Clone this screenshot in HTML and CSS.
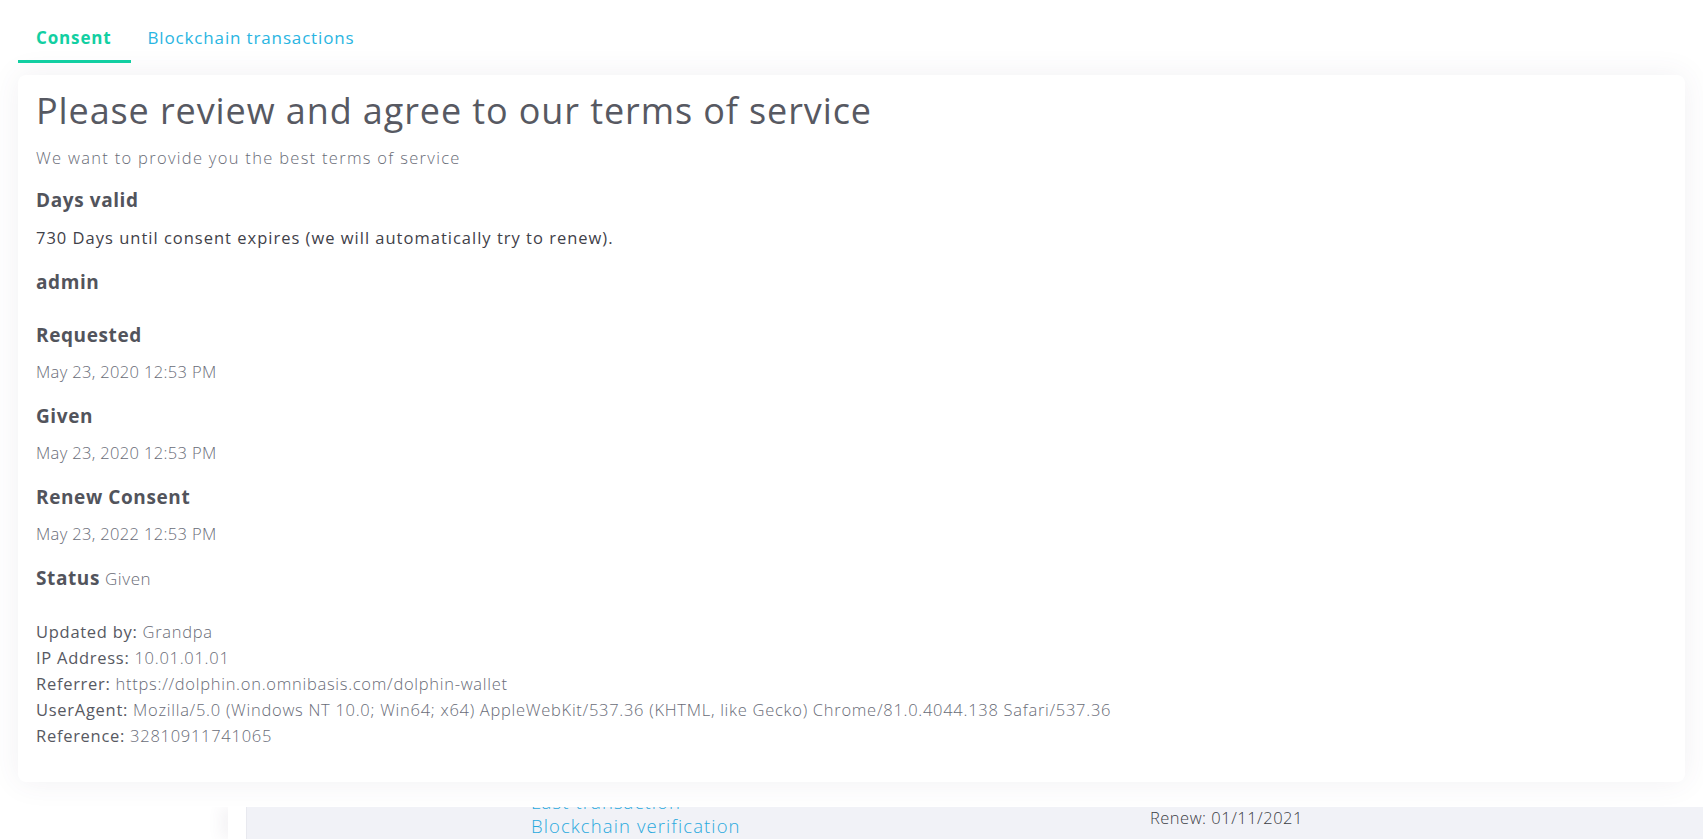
FILE: index.html
```html
<!DOCTYPE html>
<html lang="en">
<head>
    <meta charset="UTF-8">
    <meta name="viewport" content="width=device-width, initial-scale=1.0">
    <title>Consent</title>
    <link rel="stylesheet" href="styles.css">
</head>
<body>
    <div class="sheet">
        <!-- Tabs -->
        <div class="tabs">
            <a class="tab active" href="#">Consent</a>
            <a class="tab" href="#">Blockchain transactions</a>
        </div>

        <!-- Consent card -->
        <div class="card">
            <h1>Please review and agree to our terms of service</h1>
            <p class="lead">We want to provide you the best terms of service</p>

            <h4 class="first">Days valid</h4>
            <p class="text">730 Days until consent expires (we will automatically try to renew).</p>

            <h4 class="owner">admin</h4>

            <h4 class="requested">Requested</h4>
            <p class="date">May 23, 2020 12:53 PM</p>

            <h4>Given</h4>
            <p class="date">May 23, 2020 12:53 PM</p>

            <h4>Renew Consent</h4>
            <p class="date">May 23, 2022 12:53 PM</p>

            <p class="status"><b>Status</b> <span>Given</span></p>

            <div class="meta">
                <div>Updated by: <span>Grandpa</span></div>
                <div>IP Address: <span>10.01.01.01</span></div>
                <div>Referrer: <span>https://dolphin.on.omnibasis.com/dolphin-wallet</span></div>
                <div>UserAgent: <span>Mozilla/5.0 (Windows NT 10.0; Win64; x64) AppleWebKit/537.36 (KHTML, like Gecko) Chrome/81.0.4044.138 Safari/537.36</span></div>
                <div>Reference: <span>32810911741065</span></div>
            </div>
        </div>
    </div>

    <!-- Page underneath -->
    <div class="below">
        <div class="panel">
            <div class="row">
                <div class="links">
                    <a href="#">Last transaction</a>
                    <a href="#">Blockchain verification</a>
                </div>
                <div class="renew">Renew: 01/11/2021</div>
            </div>
        </div>
    </div>
</body>
</html>
```

FILE: styles.css
```css
body {
    font-family: "Open Sans", sans-serif;
    margin: 0;
    padding: 0;
    background-color: #fff;
    color: #575962;
    overflow: hidden;
}

a {
    text-decoration: none;
}

.sheet {
    background: #fff;
    padding-bottom: 25px;
    position: relative;
    z-index: 1;
}

.tabs {
    display: flex;
    padding: 0 18px;
    height: 63px;
}

.tab {
    display: block;
    padding: 26px 19px 10px 18px;
    line-height: 24px;
    font-size: 17px;
    letter-spacing: 0.85px;
    color: #29b5e2;
    border-bottom: 3px solid transparent;
}

.tab + .tab {
    padding-left: 17px;
}

.tab.active {
    color: #12cfa2;
    font-weight: 700;
    border-bottom-color: #12cfa2;
}

.card {
    margin: 12px 18px 0;
    background: #fff;
    border-radius: 8px;
    box-shadow: 0 0 30px rgba(82, 63, 105, 0.08);
    padding: 14px 18px 0;
    height: 693px;
}

h1 {
    font-size: 36px;
    font-weight: 400;
    letter-spacing: 0.9px;
    line-height: 44px;
    margin: 0;
    color: #575962;
}

.lead {
    font-size: 16.5px;
    font-weight: 300;
    letter-spacing: 1.3px;
    color: #696c77;
    line-height: 20px;
    margin: 15px 0 0;
}

h4 {
    font-size: 19px;
    font-weight: 700;
    letter-spacing: 0.6px;
    line-height: 24px;
    margin: 22px 0 0;
    color: #52545c;
}

h4.first {
    margin-top: 20px;
}

.text {
    font-size: 16.5px;
    letter-spacing: 1px;
    color: #3f4149;
    line-height: 20px;
    margin: 16px 0 0;
}

h4.owner {
    margin-top: 22px;
}

h4.requested {
    margin-top: 29px;
}

.date {
    font-size: 16.5px;
    font-weight: 300;
    letter-spacing: 0.35px;
    color: #696c77;
    line-height: 20px;
    margin: 15px 0 0;
}

.status {
    font-size: 19px;
    line-height: 24px;
    margin: 22px 0 0;
}

.status b {
    font-weight: 700;
    letter-spacing: 0.6px;
    color: #52545c;
}

.status span {
    font-size: 17px;
    font-weight: 300;
    letter-spacing: 0.6px;
    color: #696c77;
}

.meta {
    margin-top: 28px;
    font-size: 16.5px;
    letter-spacing: 0.72px;
    line-height: 26px;
    color: #575962;
}

.meta span {
    font-weight: 300;
    color: #696c77;
}

.below {
    height: 32px;
    overflow: hidden;
    padding-left: 228px;
}

.panel {
    background: #fff;
    height: 100%;
    padding-left: 18px;
    box-shadow: -8px 0 14px rgba(82, 63, 105, 0.06);
}

.row {
    background: #f1f2f7;
    height: 100%;
    display: flex;
    border-left: 1px solid #e8e9ef;
}

.links {
    display: flex;
    flex-direction: column;
    margin-left: 284px;
    margin-top: -17px;
    width: 619px;
}

.links a {
    font-size: 18.5px;
    line-height: 24px;
    letter-spacing: 1.1px;
    font-weight: 300;
    color: #29a9de;
}

.renew {
    font-size: 16.5px;
    font-weight: 300;
    letter-spacing: 0.5px;
    color: #3a3c44;
    line-height: 22px;
}
```
